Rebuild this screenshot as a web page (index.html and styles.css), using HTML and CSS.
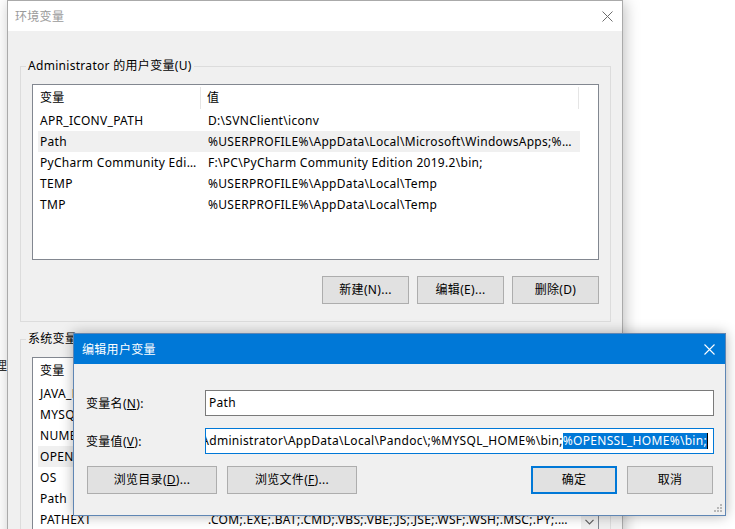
FILE: index.html
```html
<!DOCTYPE html>
<html lang="zh-CN">

<head>
  <meta charset="UTF-8" />
  <title>环境变量</title>
  <link rel="stylesheet" href="styles.css">
</head>

<body>
  <span class="behindText">理</span>

  <div class="window mainWindow">
    <div class="titleBar">
      <span class="titleText">环境变量</span>
      <svg class="closeIcon" width="11" height="11" viewBox="0 0 11 11">
        <path d="M0.5 0.5 L10.5 10.5 M10.5 0.5 L0.5 10.5" stroke="#6d6d6d" stroke-width="1" fill="none" />
      </svg>
    </div>
    <div class="windowBody">
      <fieldset class="groupBox">
        <legend>Administrator 的用户变量(U)</legend>
        <div class="listView">
          <div class="listMain">
            <div class="listHead">
              <div class="headCell headName">变量</div>
              <div class="headCell headValue">值</div>
            </div>
            <div class="listRow"><span class="cellName">APR_ICONV_PATH</span><span class="cellValue">D:\SVNClient\iconv</span></div>
            <div class="listRow hover"><span class="cellName">Path</span><span class="cellValue">%USERPROFILE%\AppData\Local\Microsoft\WindowsApps;%USERPROFILE%\AppData\Local\Pandoc\</span></div>
            <div class="listRow"><span class="cellName">PyCharm Community Edition</span><span class="cellValue">F:\PC\PyCharm Community Edition 2019.2\bin;</span></div>
            <div class="listRow"><span class="cellName">TEMP</span><span class="cellValue">%USERPROFILE%\AppData\Local\Temp</span></div>
            <div class="listRow"><span class="cellName">TMP</span><span class="cellValue">%USERPROFILE%\AppData\Local\Temp</span></div>
          </div>
        </div>
        <div class="buttonRow">
          <div class="button">新建(N)...</div>
          <div class="button">编辑(E)...</div>
          <div class="button">删除(D)</div>
        </div>
      </fieldset>

      <fieldset class="groupBox systemGroup">
        <legend>系统变量(S)</legend>
        <div class="listView systemList">
          <div class="listMain">
            <div class="listHead">
              <div class="headCell headName">变量</div>
              <div class="headCell headValue">值</div>
            </div>
            <div class="listRow"><span class="cellName">JAVA_HOME</span><span class="cellValue">C:\Program Files\Java\jdk1.8.0_221</span></div>
            <div class="listRow"><span class="cellName">MYSQL_HOME</span><span class="cellValue">C:\Program Files\MySQL\MySQL Server 8.0</span></div>
            <div class="listRow"><span class="cellName">NUMBER_OF_PROCESSORS</span><span class="cellValue">4</span></div>
            <div class="listRow hover"><span class="cellName">OPENSSL_HOME</span><span class="cellValue">C:\OpenSSL-Win64</span></div>
            <div class="listRow"><span class="cellName">OS</span><span class="cellValue">Windows_NT</span></div>
            <div class="listRow"><span class="cellName">Path</span><span class="cellValue">C:\Windows\system32;C:\Windows;C:\Windows\System32\Wbem;</span></div>
            <div class="listRow"><span class="cellName">PATHEXT</span><span class="cellValue">.COM;.EXE;.BAT;.CMD;.VBS;.VBE;.JS;.JSE;.WSF;.WSH;.MSC;.PY;.PYW</span></div>
          </div>
          <div class="scrollBar">
            <div class="scrollTrack"></div>
            <div class="scrollArrow">
              <svg width="9" height="6" viewBox="0 0 9 6">
                <path d="M0.5 0.8 L4.5 4.8 L8.5 0.8" stroke="#606060" stroke-width="1.2" fill="none" />
              </svg>
            </div>
          </div>
        </div>
      </fieldset>
    </div>
  </div>

  <div class="dialog">
    <div class="dialogTitle">
      <span class="dialogTitleText">编辑用户变量</span>
      <svg class="dialogClose" width="11" height="11" viewBox="0 0 11 11">
        <path d="M0.5 0.5 L10.5 10.5 M10.5 0.5 L0.5 10.5" stroke="#ffffff" stroke-width="1.1" fill="none" />
      </svg>
    </div>
    <div class="dialogBody">
      <div class="fieldRow">
        <label class="fieldLabel">变量名(<u>N</u>):</label>
        <div class="textBox"><span class="textValue">Path</span></div>
      </div>
      <div class="fieldRow">
        <label class="fieldLabel">变量值(<u>V</u>):</label>
        <div class="textBox focused">
          <div class="textScroll">
            <span class="textValue">Administrator\AppData\Local\Pandoc\;%MYSQL_HOME%\bin;<span class="selected">%OPENSSL_HOME%\bin;</span></span>
          </div>
          <span class="caret"></span>
        </div>
      </div>
      <div class="dialogButtons">
        <div class="buttonGroup">
          <div class="button wide">浏览目录(<u>D</u>)...</div>
          <div class="button wide">浏览文件(<u>F</u>)...</div>
        </div>
        <div class="buttonGroup">
          <div class="button default">确定</div>
          <div class="button">取消</div>
        </div>
      </div>
    </div>
    <svg class="sizeGrip" width="10" height="10" viewBox="0 0 10 10">
      <rect x="7" y="1" width="2" height="2" fill="#b8b8b8" />
      <rect x="4" y="4" width="2" height="2" fill="#b8b8b8" />
      <rect x="7" y="4" width="2" height="2" fill="#b8b8b8" />
      <rect x="1" y="7" width="2" height="2" fill="#b8b8b8" />
      <rect x="4" y="7" width="2" height="2" fill="#b8b8b8" />
      <rect x="7" y="7" width="2" height="2" fill="#b8b8b8" />
    </svg>
  </div>
</body>

</html>
```

FILE: styles.css
```css
html {
  background: #ffffff;
}

body {
  margin: 0;
  padding: 0;
  height: 529px;
  overflow: hidden;
  position: relative;
  font-family: "Segoe UI", "Noto Sans", "Noto Sans CJK SC", sans-serif;
  font-size: 12px;
  letter-spacing: 0.3px;
  color: #000;
}

.behindText {
  position: absolute;
  left: -6px;
  top: 355px;
  font-size: 13px;
  color: #333;
}

.window {
  box-sizing: border-box;
  background: #f0f0f0;
}

.mainWindow {
  margin-left: 7px;
  width: 616px;
  height: 560px;
  border: 1px solid #aaaaaa;
  box-shadow: 2px 2px 14px rgba(0, 0, 0, 0.25);
  position: relative;
}

.titleBar {
  height: 30px;
  background: #ffffff;
  display: flex;
  align-items: center;
  justify-content: space-between;
  padding-left: 7px;
  padding-right: 9px;
}

.titleText {
  color: #9a9a9a;
}

.windowBody {
  padding: 27px 11px 0 12px;
}

.groupBox {
  margin: 0;
  border: 1px solid #dcdcdc;
  padding: 10px 11px 17px 11px;
}

.groupBox legend {
  padding: 0 2px;
  margin-left: -6px;
  line-height: 16px;
}

.systemGroup {
  margin-top: 9px;
}

.listView {
  box-sizing: border-box;
  height: 176px;
  border: 1px solid #828790;
  background: #ffffff;
  display: flex;
  overflow: hidden;
}

.systemList {
  height: 174px;
}

.listMain {
  flex: 1;
  min-width: 0;
}

.listHead {
  height: 25px;
  display: flex;
  align-items: center;
}

.headCell {
  box-sizing: border-box;
  height: 22px;
  line-height: 22px;
  border-right: 1px solid #e5e5e5;
}

.headName {
  width: 168px;
  padding-left: 7px;
}

.headValue {
  width: 378px;
  padding-left: 6px;
}

.listRow {
  display: flex;
  height: 21px;
  line-height: 21px;
  margin-left: 5px;
  width: 542px;
}

.listRow.hover {
  background: #f0f0f0;
}

.cellName,
.cellValue {
  box-sizing: border-box;
  padding-left: 2px;
  white-space: nowrap;
  overflow: hidden;
  text-overflow: ellipsis;
}

.cellName {
  width: 168px;
  padding-right: 7px;
}

.cellValue {
  width: 374px;
  padding-right: 6px;
}

.scrollBar {
  width: 17px;
  background: #f0f0f0;
  display: flex;
  flex-direction: column;
}

.scrollTrack {
  flex: 1;
}

.scrollArrow {
  height: 17px;
  display: flex;
  align-items: center;
  justify-content: center;
}

.buttonRow {
  display: flex;
  justify-content: flex-end;
  gap: 8px;
  margin-top: 16px;
}

.button {
  box-sizing: border-box;
  width: 87px;
  height: 28px;
  line-height: 26px;
  text-align: center;
  background: #e1e1e1;
  border: 1px solid #adadad;
  white-space: nowrap;
}

.button u {
  text-underline-offset: 1px;
}

.dialog {
  position: absolute;
  left: 73px;
  top: 333px;
  width: 653px;
  height: 183px;
  box-sizing: border-box;
  border: 1px solid #5f86b4;
  background: #f0f0f0;
  box-shadow: 0 0 12px rgba(0, 0, 0, 0.3);
}

.dialogTitle {
  height: 30px;
  background: #0078d7;
  color: #ffffff;
  display: flex;
  align-items: center;
  justify-content: space-between;
  padding-left: 8px;
  padding-right: 10px;
}

.dialogBody {
  padding: 26px 11px 16px 12px;
}

.fieldRow {
  display: flex;
  align-items: center;
  margin-bottom: 12px;
}

.fieldLabel {
  width: 119px;
  flex-shrink: 0;
}

.textBox {
  box-sizing: border-box;
  flex: 1;
  min-width: 0;
  height: 26px;
  border: 1px solid #7a7a7a;
  background: #ffffff;
  display: flex;
  align-items: center;
  padding-left: 3px;
  white-space: nowrap;
}

.textBox.focused {
  border-color: #0078d7;
  justify-content: flex-end;
  padding-left: 0;
  padding-right: 5px;
}

.textScroll {
  flex: 1;
  min-width: 0;
  overflow: hidden;
  display: flex;
  justify-content: flex-end;
}

.textValue {
  line-height: 16px;
  flex-shrink: 0;
}

.selected {
  background: #0078d7;
  color: #ffffff;
}

.caret {
  width: 1px;
  height: 16px;
  background: #000;
  flex-shrink: 0;
}

.dialogButtons {
  display: flex;
  justify-content: space-between;
  margin: 5px 1px 0 1px;
}

.buttonGroup {
  display: flex;
  gap: 10px;
}

.dialogButtons .button {
  width: 86px;
}

.dialogButtons .button.wide {
  width: 130px;
}

.button.default {
  border: 2px solid #0078d7;
  line-height: 24px;
}

.sizeGrip {
  position: absolute;
  right: 2px;
  bottom: 2px;
}
```
